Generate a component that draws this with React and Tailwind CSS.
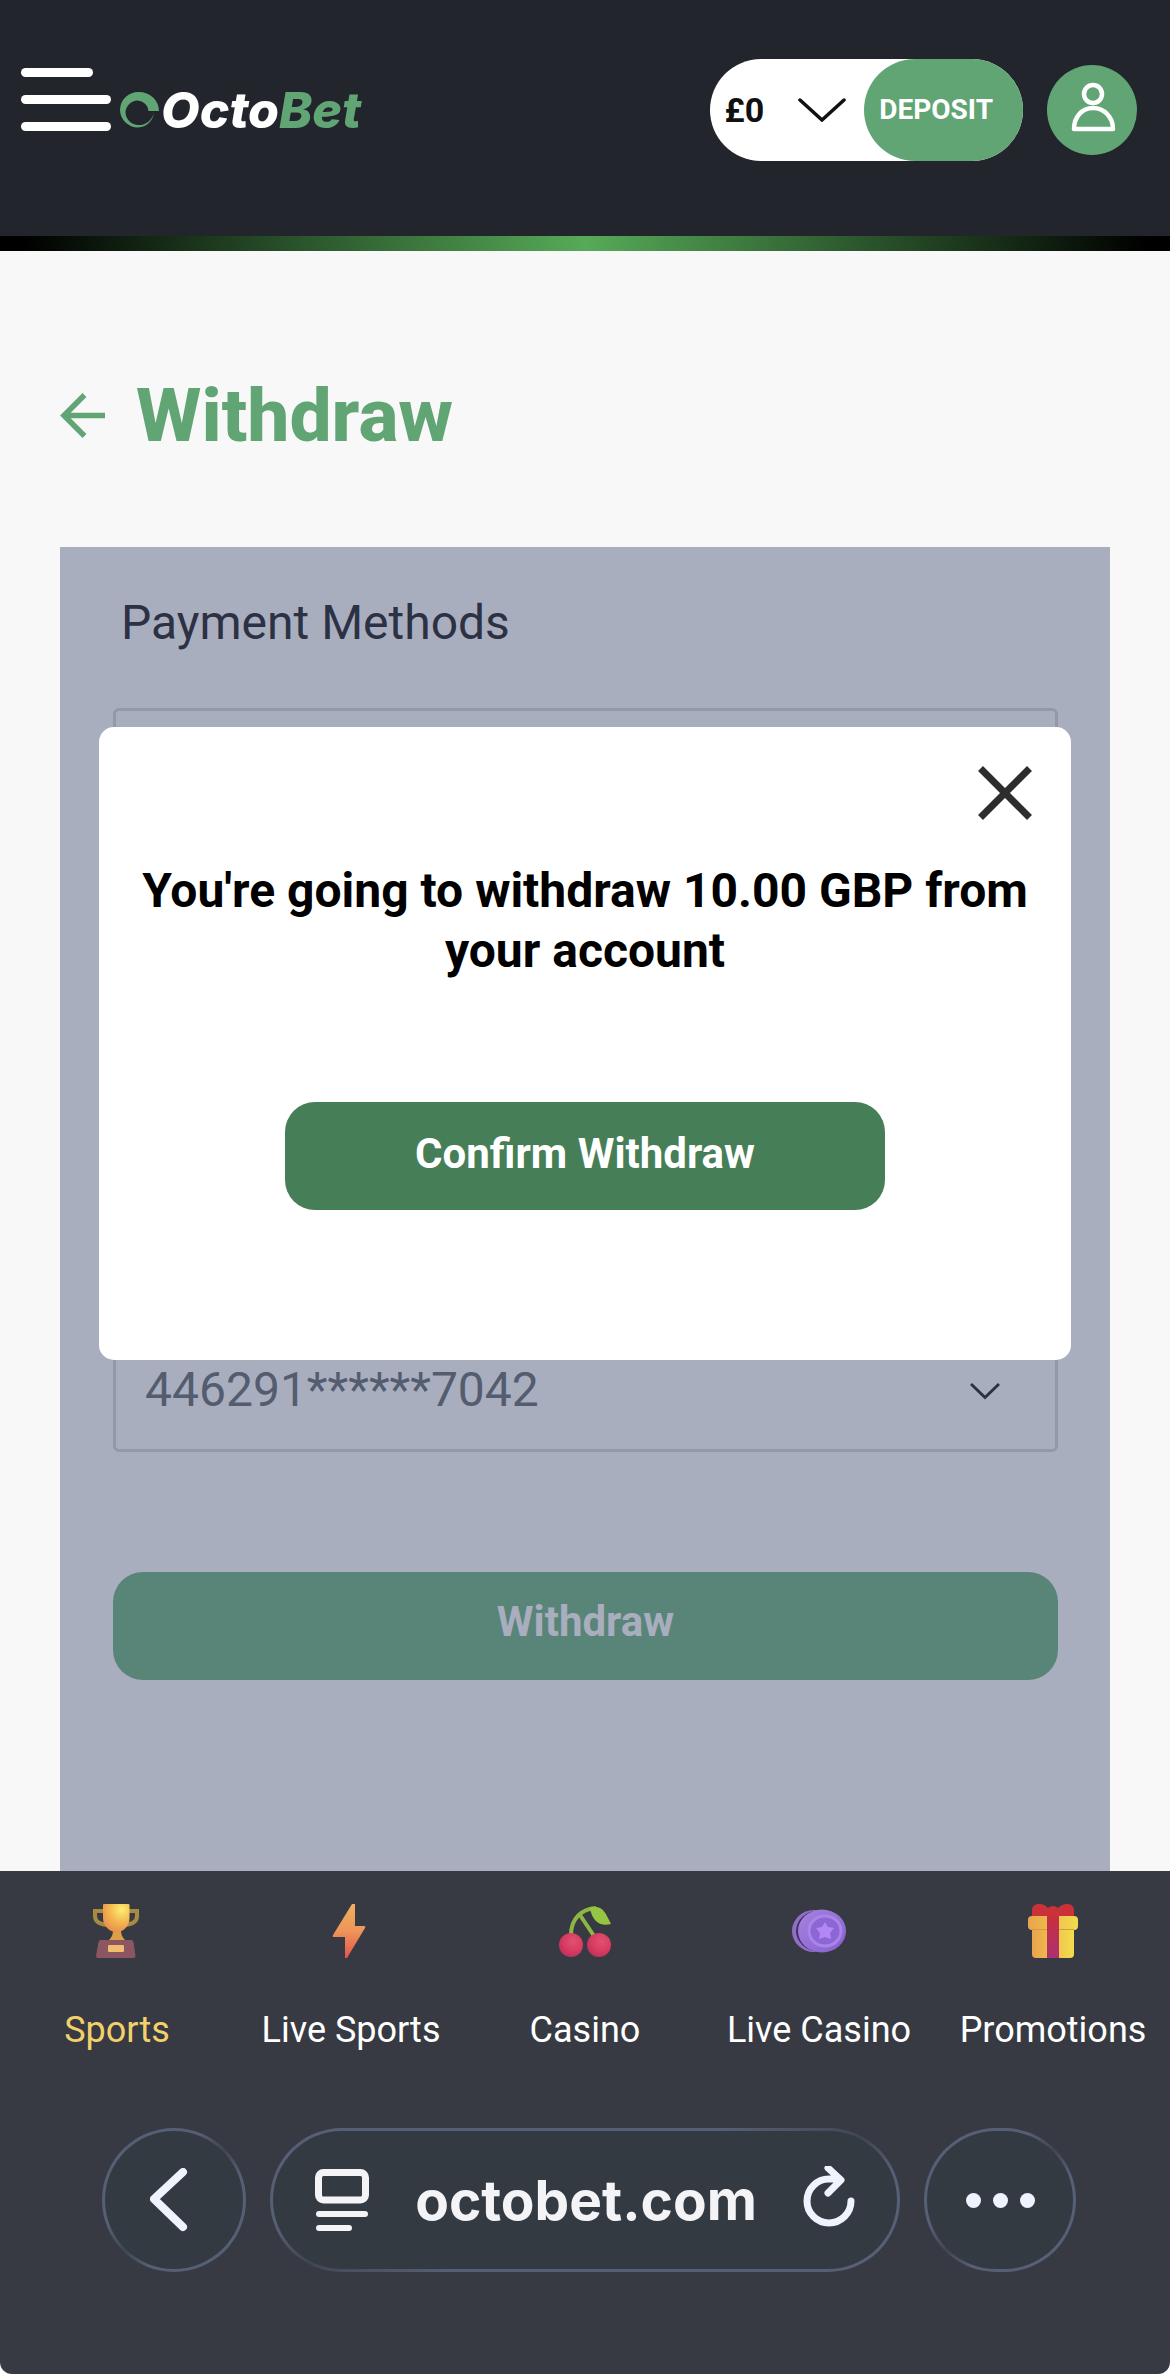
import React, { useState } from 'react';

const Logo = () => (
    <a href="#home" className="flex items-center gap-0.5 font-[Inter,sans-serif] text-[50px] leading-[48px] font-extrabold italic">
        <svg viewBox="0 0 39 36" className="w-[39px] h-9" aria-hidden="true">
            <path
                d="M39 19H28.5A11.5 11 0 0 0 17.5 8.5A12.5 12.5 0 0 0 5.5 20A13 13 0 0 0 18.5 33A15.5 15.5 0 0 0 34 20A17 16.5 0 0 1 18 35.5A18 17.8 0 0 1 0 17.8A18.5 18 0 0 1 19 0A20 19 0 0 1 39 19Z"
                fill="#61a575"
            />
        </svg>
        <span className="text-white">Octo<span className="text-[#61a575]">Bet</span></span>
    </a>
);

const TrophyIcon = () => (
    <svg viewBox="0 0 54 54" className="w-[54px] h-[54px]" aria-hidden="true">
        <defs>
            <radialGradient id="cup" cx="0.7" cy="0.2" r="0.9">
                <stop offset="0" stopColor="#fbf071" />
                <stop offset="0.55" stopColor="#f3b250" />
                <stop offset="1" stopColor="#e58a4b" />
            </radialGradient>
        </defs>
        <path d="M14 7H5v5c0 5 4 8 12 9M39 7h8v5c0 5-4 8-12 9" fill="none" stroke="#a98a45" strokeWidth="4" />
        <path d="M23 26h8c0 4 1 7 4 10H19c3-3 4-6 4-10Z" fill="#dd9f45" />
        <path d="M13 1q0-1 1-1h24.500q1 0 1 1v13c0 8-6 14-13 14s-13.500-6-13.500-14Z" fill="url(#cup)" />
        <path d="M11 36h30q2 0 2.500 2l2 14q0 2-2 2H8q-2 0-2-2l2.500-14q.5-2 2.500-2Z" fill="#8b5561" />
        <rect x="18" y="41" width="16" height="7" rx="1" fill="#f0bd6e" />
    </svg>
);

const BoltIcon = () => (
    <svg viewBox="0 0 54 54" className="w-[54px] h-[54px]" aria-hidden="true">
        <defs>
            <linearGradient id="bolt" x1="0.5" y1="0" x2="0.5" y2="1">
                <stop offset="0" stopColor="#efb05d" />
                <stop offset="0.5" stopColor="#ee9558" />
                <stop offset="1" stopColor="#e2554f" />
            </linearGradient>
        </defs>
        <path d="M28 0h3v22h9q2 0 1 2L23 54h-2V33H10q-2 0-1-2Z" fill="url(#bolt)" />
    </svg>
);

const CherryIcon = () => (
    <svg viewBox="0 0 54 54" className="w-[54px] h-[54px]" aria-hidden="true">
        <defs>
            <radialGradient id="cherry" cx="0.6" cy="0.35" r="0.7">
                <stop offset="0" stopColor="#e0526f" />
                <stop offset="0.6" stopColor="#d93a61" />
                <stop offset="1" stopColor="#b8325a" />
            </radialGradient>
        </defs>
        <path d="M13 31C13 14 24 5 38 4M22 11l14 21" fill="none" stroke="#8bb742" strokeWidth="4" />
        <path d="M32 4C43 0 47 8 50 14q2 4 3 6C42 23 34 17 32 4Z" fill="#96c544" />
        <circle cx="13" cy="41" r="12" fill="url(#cherry)" />
        <circle cx="41" cy="41" r="12" fill="url(#cherry)" />
    </svg>
);

const ChipIcon = () => (
    <svg viewBox="0 0 54 54" className="w-[54px] h-[54px]" aria-hidden="true">
        <defs>
            <linearGradient id="chip" x1="0" y1="0" x2="1" y2="1">
                <stop offset="0" stopColor="#a583dc" />
                <stop offset="1" stopColor="#8660d0" />
            </linearGradient>
        </defs>
        <ellipse cx="22" cy="27" rx="22" ry="21" fill="#9070c6" />
        <ellipse cx="27" cy="27" rx="23" ry="20.500" fill="#432d63" />
        <ellipse cx="30" cy="27" rx="24" ry="21.500" fill="url(#chip)" />
        <ellipse cx="33" cy="27" rx="16" ry="15" fill="#8d66d6" stroke="#ab84ea" strokeWidth="3" />
        <path d="m33 18 3 5 6 1-4 5 1 6-6-2-6 2 1-6-4-5 6-1Z" fill="#b388f4" />
    </svg>
);

const GiftIcon = () => (
    <svg viewBox="0 0 54 54" className="w-[54px] h-[54px]" aria-hidden="true">
        <defs>
            <linearGradient id="box" x1="0" y1="0" x2="1" y2="0">
                <stop offset="0" stopColor="#e9a44c" />
                <stop offset="1" stopColor="#f3dc4e" />
            </linearGradient>
            <linearGradient id="ribbon" x1="0" y1="0" x2="0" y2="1">
                <stop offset="0" stopColor="#c92f3c" />
                <stop offset="1" stopColor="#ab3173" />
            </linearGradient>
        </defs>
        <path d="M6 12V6c0-4 3-6 7-6 5 0 7 2 9 4q5-4 10 0c2-2 5-4 9-4s7 2 7 6v6Z" fill="#c93238" />
        <rect x="6" y="20" width="42" height="34" rx="4" fill="url(#box)" />
        <rect x="2" y="12" width="50" height="14" rx="4" fill="url(#box)" />
        <path d="M6 25.500h42" stroke="#d29a40" strokeWidth="1" />
        <path d="M21 12h12v42H21Z" fill="url(#ribbon)" />
    </svg>
);

const navItems = [
    { label: 'Sports', Icon: TrophyIcon, active: true },
    { label: 'Live Sports', Icon: BoltIcon },
    { label: 'Casino', Icon: CherryIcon },
    { label: 'Live Casino', Icon: ChipIcon },
    { label: 'Promotions', Icon: GiftIcon },
];

const Header = () => (
    <header>
        <div className="flex items-center justify-between bg-[#23252d] pl-[21px] pr-[33px] pt-[59px] pb-[75px]">
            <div className="flex items-center gap-[9px]">
                <button type="button" aria-label="Menu" className="flex flex-col gap-[18px] pb-[21px]">
                    <span className="w-[72px] h-[9px] rounded-full bg-white" />
                    <span className="w-[90px] h-[9px] rounded-full bg-white" />
                    <span className="w-[90px] h-[9px] rounded-full bg-white" />
                </button>
                <Logo />
            </div>

            <div className="flex items-center gap-6">
                <div className="flex items-center h-[102px] rounded-full bg-white">
                    <button type="button" className="flex items-center gap-[34px] pl-[15px] pr-[18px] text-[34px] font-bold text-[#111]">
                        £0
                        <svg viewBox="0 0 48 24" className="w-12 h-6" fill="none" stroke="#111" strokeWidth="3.500" strokeLinecap="round" aria-hidden="true">
                            <path d="M2 2l22 20L46 2" />
                        </svg>
                    </button>
                    <button type="button" className="h-full rounded-full bg-[#61a575] pl-[15px] pr-[30px] text-[28px] font-bold text-white">
                        DEPOSIT
                    </button>
                </div>
                <button type="button" aria-label="Account" className="w-[90px] h-[90px] rounded-full bg-[#61a575]">
                    <svg viewBox="0 0 90 90" fill="none" stroke="#fff" strokeWidth="4.500" strokeLinejoin="round" aria-hidden="true">
                        <circle cx="46" cy="29" r="9" />
                        <path d="M27 64c0-12 8-21 19-21s20 9 20 21Z" />
                    </svg>
                </button>
            </div>
        </div>
        <div className="h-[15px] bg-[linear-gradient(90deg,#000_2%,#56aa58_50%,#000_98%)]" />
    </header>
);

const ConfirmDialog = ({ onClose }) => (
    <div role="dialog" aria-labelledby="confirm-title" className="absolute inset-x-[39px] top-[180px] flex flex-col items-center rounded-[15px] bg-white px-[39px] pt-[39px] pb-[150px]">
        <button type="button" aria-label="Close" className="self-end" onClick={onClose}>
            <svg viewBox="0 0 54 54" className="w-[54px] h-[54px]" stroke="#2d2d2d" strokeWidth="7" aria-hidden="true">
                <path d="M2.500 2.500l49 49M51.500 2.500l-49 49" />
            </svg>
        </button>
        <h2 id="confirm-title" className="mt-[41px] text-center text-5xl leading-[60px] font-bold text-black">
            You're going to withdraw 10.00 GBP from your account
        </h2>
        <button type="button" className="mt-[121px] w-full max-w-[600px] h-[108px] rounded-[30px] bg-[#467e57] pb-1.5 text-[42px] font-bold text-white" onClick={onClose}>
            Confirm Withdraw
        </button>
    </div>
);

const WithdrawPanel = () => {
    const [open, setOpen] = useState(true);
    const [amount, setAmount] = useState('');

    return (
        <section className="relative flex-1 bg-[#a9aebf] pl-[53px] pr-[52px] pt-10">
            <form onSubmit={(e) => { e.preventDefault(); setOpen(true); }}>
                <label htmlFor="method" className="block mb-[49px] pl-2 text-5xl leading-[72px] text-[#2c3143]">
                    Payment Methods
                </label>
                <div className="flex flex-col gap-[186px]">
                    <select id="method" className="w-full h-[124px] appearance-none rounded-md border-3 border-[#9499a9]" />
                    <input
                        type="text"
                        aria-label="Amount"
                        value={amount}
                        onChange={(e) => setAmount(e.target.value)}
                        className="w-full h-[124px] rounded-md border-3 border-[#9499a9]"
                    />
                    <div className="relative">
                        <select aria-label="Card" className="block w-full h-[124px] appearance-none rounded-md border-3 border-[#9499a9] pl-[29px] text-5xl text-[#545c70]">
                            <option>446291******7042</option>
                        </select>
                        <svg viewBox="0 0 30 18" className="pointer-events-none absolute right-[58px] top-[54px] w-[30px] h-[18px]" fill="none" stroke="#2c3143" strokeWidth="3" aria-hidden="true">
                            <path d="M1 2l14 13.500L29 2" />
                        </svg>
                    </div>
                </div>
                <button type="submit" className="mt-[120px] w-full h-[108px] rounded-[30px] bg-[#598579] pb-2.5 text-[42px] font-bold text-[#a9aebf]">
                    Withdraw
                </button>
            </form>
            {open && <ConfirmDialog onClose={() => setOpen(false)} />}
        </section>
    );
};

const BottomNav = () => (
    <nav className="grid grid-cols-5 pt-[33px]">
        {navItems.map(({ label, Icon, active }) => (
            <a
                key={label}
                href="#nav"
                className={`flex flex-col items-center gap-12 whitespace-nowrap text-4xl leading-[48px] ${active ? 'text-[#f2d16b]' : 'text-white'}`}
            >
                <Icon />
                {label}
            </a>
        ))}
    </nav>
);

// Glass style outline, brighter at the top left and bottom right
const glass = 'rounded-full p-[3px] bg-[linear-gradient(to_bottom_right,#566075_36%,#3f4550_50%,#566075_64%)]';
const glassInner = 'flex h-full w-full items-center rounded-full bg-[#343a42]';

const BrowserBar = () => (
    <div className="flex gap-6 pl-[102px] pr-[94px] pt-[74px] pb-[102px] *:h-36">
        <button type="button" aria-label="Back" className={`w-36 shrink-0 ${glass}`}>
            <span className={`justify-center ${glassInner}`}>
                <svg viewBox="2 0 48 64" className="w-12 h-16" fill="none" stroke="#eef3ff" strokeWidth="8" strokeLinecap="round" strokeLinejoin="round" aria-hidden="true">
                    <path d="M35 4L6 31l29 28" />
                </svg>
            </span>
        </button>

        <div className={`flex-1 ${glass}`}>
            <div className={`justify-between px-[42px] ${glassInner}`}>
                <button type="button" aria-label="Page settings">
                    <svg viewBox="0 0 54 62" className="w-[54px] h-[62px]" fill="none" stroke="#f4f3f6" strokeLinecap="round" aria-hidden="true">
                        <rect x="3.500" y="3.500" width="47" height="27.500" rx="5" strokeWidth="7" />
                        <path d="M4 45h46M4 59h30" strokeWidth="6" />
                    </svg>
                </button>
                <span className="font-[Inter,sans-serif] text-[55px] leading-[64px] font-bold text-[#f4f3f6]">octobet.com</span>
                <button type="button" aria-label="Reload">
                    <svg viewBox="0 0 52 68" className="w-[52px] h-[68px]" fill="none" stroke="#eef3ff" strokeWidth="7" strokeLinecap="round" strokeLinejoin="round" aria-hidden="true">
                        <path d="M48 35A22 22 0 1 1 26 13h9M25 2l13 12-13 13" />
                    </svg>
                </button>
            </div>
        </div>

        <button type="button" aria-label="More" className={`w-[152px] shrink-0 ${glass}`}>
            <span className={`justify-center gap-3 ${glassInner}`}>
                <span className="w-[15px] h-[15px] rounded-full bg-[#eef3ff]" />
                <span className="w-[15px] h-[15px] rounded-full bg-[#eef3ff]" />
                <span className="w-[15px] h-[15px] rounded-full bg-[#eef3ff]" />
            </span>
        </button>
    </div>
);

const App = () => (
    <div className="flex min-h-screen flex-col bg-[#f8f8f8] font-[Roboto,sans-serif]">
        <Header />

        <main className="flex flex-1 flex-col px-[60px] pt-[116px]">
            <div className="flex items-center gap-[31px] mb-[84px]">
                <button type="button" aria-label="Go back">
                    <svg viewBox="0 0 45 45" className="w-[45px] h-[45px]" fill="none" stroke="#61a575" strokeWidth="5.500" aria-hidden="true">
                        <path d="M45 22.500H5M24.500 2L4 22.500 24.500 43" />
                    </svg>
                </button>
                <h1 className="text-[75px] leading-[96px] font-extrabold text-[#61a575]">Withdraw</h1>
            </div>
            <WithdrawPanel />
        </main>

        <footer className="bg-white">
            <div className="rounded-b-xl bg-[#373a42]">
                <BottomNav />
                <BrowserBar />
            </div>
        </footer>
    </div>
);

export default App;
